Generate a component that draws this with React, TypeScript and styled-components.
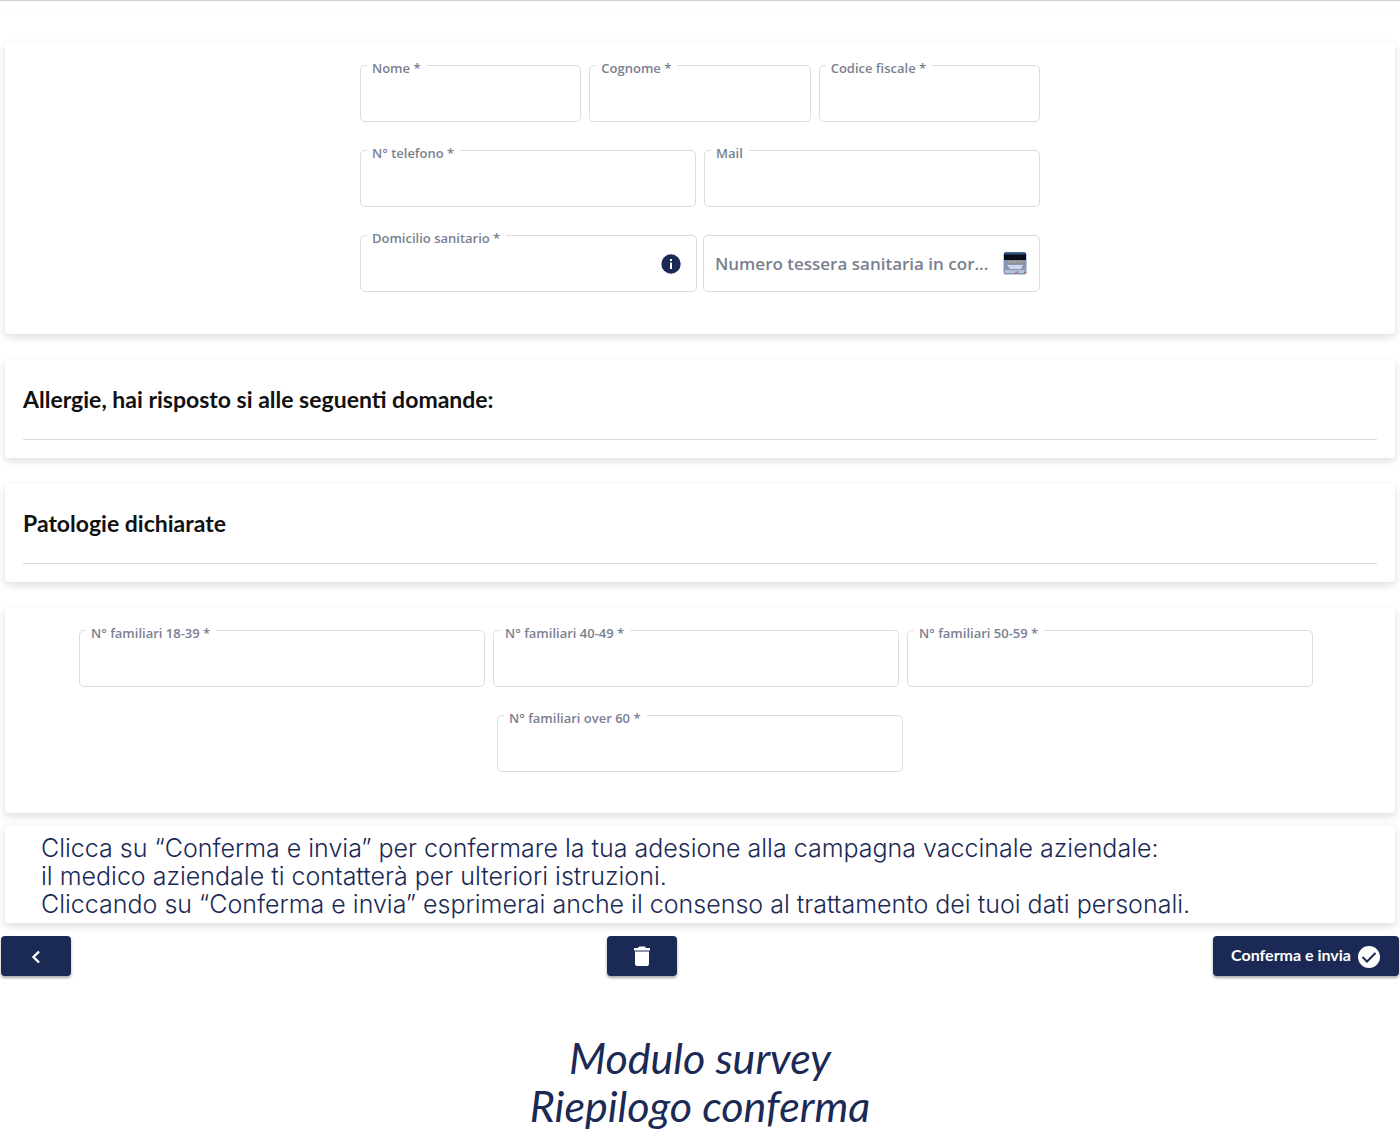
import React, { useId } from "react";
import styled, { createGlobalStyle } from "styled-components";

const navy = "#1b2a55";

const GlobalStyle = createGlobalStyle`
  *, *::before, *::after { box-sizing: border-box; }
  body {
    margin: 0;
    background: #fff;
    color: #111;
    font-family: Lato, "Open Sans", sans-serif;
  }
`;

const TopStrip = styled.header`
  height: 13px;
  border-top: 1px solid #cfcfcf;
  border-bottom: 1px solid #f9f9f9;
`;

const Page = styled.main`
  padding-top: 30px;
`;

const Card = styled.section<{ $gap?: number }>`
  margin: 0 5px ${(p) => p.$gap ?? 26}px;
  background: #fff;
  border-radius: 4px;
  box-shadow: 0 3px 8px rgba(0, 0, 0, 0.14);
`;

const PersonalGrid = styled.div`
  max-width: 680px;
  margin: 0 auto;
  padding: 22px 0 42px;
  display: flex;
  flex-direction: column;
  gap: 28px;
`;

const FamilyGrid = styled.div`
  padding: 22px 74px 41px;
  display: flex;
  flex-direction: column;
  align-items: center;
  gap: 28px;
`;

const Row = styled.div<{ $gap?: number }>`
  display: flex;
  width: 100%;
  gap: ${(p) => p.$gap ?? 8}px;
`;

const FamilyRow = styled(Row)`
  padding-right: 8px;
`;

const CenteredRow = styled.div`
  width: calc((100% - 24px) / 3);
`;

const FieldBox = styled.div`
  position: relative;
  flex: 1 1 0;
  min-width: 0;
  height: 57px;
  display: flex;
  align-items: center;
  border: 1px solid #dcdcdc;
  border-radius: 5px;
  padding: 0 12px 0 11px;

  &:focus-within { border-color: ${navy}; }
`;

const FloatingLabel = styled.label`
  position: absolute;
  top: -6px;
  left: 6px;
  padding: 0 6px 0 5px;
  background: #fff;
  color: #7a8090;
  font: 600 13px/16px "Open Sans", sans-serif;
  white-space: nowrap;
`;

const Input = styled.input`
  flex: 1;
  min-width: 0;
  height: 100%;
  border: 0;
  padding: 0;
  outline: 0;
  background: transparent;
  color: #333;
  font: 600 17px/24px "Open Sans", sans-serif;
  text-overflow: ellipsis;

  &::placeholder { color: #7a8090; opacity: 1; }
`;

const IconButton = styled.button`
  display: flex;
  border: 0;
  padding: 0;
  background: none;
  cursor: pointer;
`;

const InfoButton = styled(IconButton)`
  margin-right: 3px;
`;

const SectionTitle = styled.h2`
  margin: 0 18px;
  padding: 24px 0 25px;
  border-bottom: 1px solid #dcdcdc;
  font-size: 23px;
  line-height: 30px;
  font-weight: 700;
`;

const TitleCard = styled(Card)`
  padding-bottom: 18px;
`;

const Notice = styled.p`
  margin: 0;
  padding: 8px 36px 5px;
  color: ${navy};
  font: 300 25px/28px Inter, sans-serif;
`;

const Actions = styled.div`
  display: flex;
  justify-content: space-between;
  padding: 0 1px;
`;

const Button = styled.button`
  display: flex;
  align-items: center;
  justify-content: center;
  gap: 6px;
  min-width: 70px;
  height: 40px;
  padding: 0 18px;
  border: 0;
  border-radius: 4px;
  background: ${navy};
  color: #fff;
  box-shadow: 0 2px 3px rgba(0, 0, 0, 0.35);
  font: 700 16px/20px Lato, sans-serif;
  cursor: pointer;
`;

const ButtonText = styled.span`
  padding-bottom: 3px;
`;

const Caption = styled.h1`
  margin: 0;
  padding: 58px 16px 10px;
  color: ${navy};
  text-align: center;
  font: italic 400 43px/48px Lato, sans-serif;
`;

function Field({ label, children }: { label: string; children?: React.ReactNode }) {
  const id = useId();
  return (
    <FieldBox>
      <FloatingLabel htmlFor={id}>{label}</FloatingLabel>
      <Input id={id} type="text" />
      {children}
    </FieldBox>
  );
}

const InfoIcon = () => (
  <svg width="20" height="20" viewBox="0 0 20 20" aria-hidden="true">
    <circle cx="10" cy="10" r="9.7" fill={navy} />
    <path d="M9 5h2v2H9zM9 8.500h2V15H9z" fill="#fff" />
  </svg>
);

const HealthCardIcon = () => (
  <svg width="24" height="23" viewBox="0 0 24 23" aria-hidden="true">
    <rect x="0.5" y="0.5" width="23" height="22" rx="2" fill="#8596b8" />
    <path d="M1 2.5Q1 .5 3 .5h18q2 0 2 2V8H1z" fill="#080d1c" />
    <path d="M1.500 1.500h21" stroke="#2c568c" strokeWidth="2" />
    <path d="M4 8h16v4H4z" fill="#8b9195" />
    <path d="M5 10h14" stroke="#bdb9aa" strokeWidth="1" strokeDasharray="2 1" />
    <path d="M4 13h16l-2 4H7z" fill="#cfd7e8" />
    <path d="M2 18h20v3H2z" fill="#b4c0da" />
    <path d="M12 21.500l3-2M21 20l2 1" stroke="#cf5a6c" strokeWidth="1.500" />
  </svg>
);

const BackIcon = () => (
  <svg width="24" height="24" viewBox="0 0 24 24" aria-hidden="true">
    <path d="M15 7.500 9.500 13l5.500 5.500" fill="none" stroke="#fff" strokeWidth="2.400" />
  </svg>
);

const TrashIcon = () => (
  <svg width="24" height="24" viewBox="0 0 24 24" aria-hidden="true">
    <path d="M4 4h4l1-1.500h6L16 4h4v2.500H4zM5 7.500h14V20q0 2-2 2H7q-2 0-2-2z" fill="#fff" />
  </svg>
);

const CheckIcon = () => (
  <svg width="24" height="24" viewBox="0 0 24 24" aria-hidden="true">
    <circle cx="12" cy="13" r="11" fill="#fff" />
    <path d="m5.500 13 4.500 4.500 8.500-8.500" fill="none" stroke={navy} strokeWidth="2" />
  </svg>
);

export default function App() {
  const cardId = useId();
  return (
    <>
      <GlobalStyle />
      <TopStrip />
      <Page>
        <Card>
          <PersonalGrid>
            <Row>
              <Field label="Nome *" />
              <Field label="Cognome *" />
              <Field label="Codice fiscale *" />
            </Row>
            <Row>
              <Field label="N° telefono *" />
              <Field label="Mail" />
            </Row>
            <Row $gap={6}>
              <Field label="Domicilio sanitario *">
                <InfoButton type="button" aria-label="Informazioni">
                  <InfoIcon />
                </InfoButton>
              </Field>
              <FieldBox>
                <Input
                  id={cardId}
                  type="text"
                  aria-label="Numero tessera sanitaria in corso"
                  placeholder="Numero tessera sanitaria in cor..."
                />
                <IconButton type="button" aria-label="Tessera sanitaria">
                  <HealthCardIcon />
                </IconButton>
              </FieldBox>
            </Row>
          </PersonalGrid>
        </Card>

        <TitleCard>
          <SectionTitle>Allergie, hai risposto si alle seguenti domande:</SectionTitle>
        </TitleCard>
        <TitleCard>
          <SectionTitle>Patologie dichiarate</SectionTitle>
        </TitleCard>

        <Card $gap={13}>
          <FamilyGrid>
            <FamilyRow>
              <Field label="N° familiari 18-39 *" />
              <Field label="N° familiari 40-49 *" />
              <Field label="N° familiari 50-59 *" />
            </FamilyRow>
            <CenteredRow>
              <Field label="N° familiari over 60 *" />
            </CenteredRow>
          </FamilyGrid>
        </Card>

        <Card $gap={13}>
          <Notice>
            Clicca su “Conferma e invia” per confermare la tua adesione alla campagna vaccinale aziendale:
            <br />
            il medico aziendale ti contatterà per ulteriori istruzioni.
            <br />
            Cliccando su “Conferma e invia” esprimerai anche il consenso al trattamento dei tuoi dati personali.
          </Notice>
        </Card>

        <Actions>
          <Button type="button" aria-label="Indietro">
            <BackIcon />
          </Button>
          <Button type="button" aria-label="Elimina">
            <TrashIcon />
          </Button>
          <Button type="submit">
            <ButtonText>Conferma e invia</ButtonText>
            <CheckIcon />
          </Button>
        </Actions>

        <Caption>
          Modulo survey
          <br />
          Riepilogo conferma
        </Caption>
      </Page>
    </>
  );
}
